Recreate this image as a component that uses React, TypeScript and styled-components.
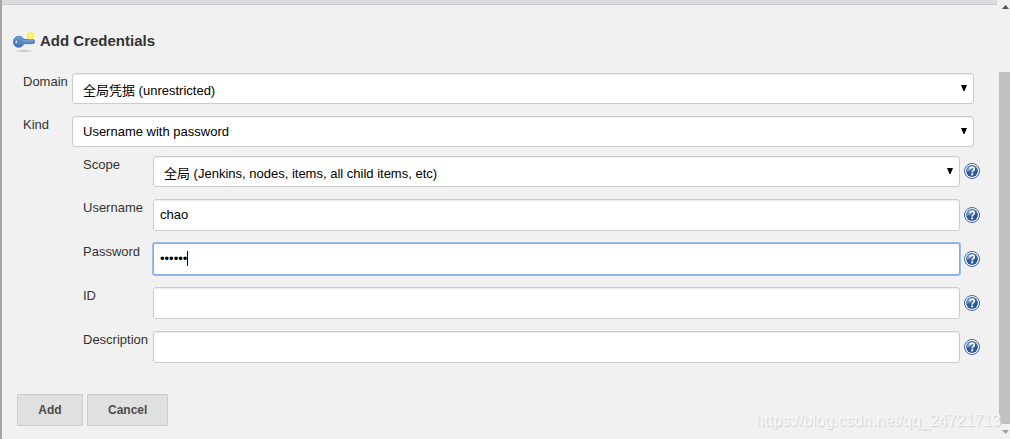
import React from "react";
import styled, { createGlobalStyle, css } from "styled-components";

const GlobalStyle = createGlobalStyle`
  *, *::before, *::after { box-sizing: border-box; }
  body {
    margin: 0;
    background: #f1f1f1;
    color: #333;
    font: 13px/16px "Liberation Sans", "Noto Sans CJK SC", sans-serif;
  }
`;

const Page = styled.div`
  position: relative;
  display: flex;
  min-height: 100vh;
  overflow: hidden;
  border-left: 2px solid #a6a6a6;
`;

const Dialog = styled.main`
  flex: 1;
  min-width: 0;
`;

const TopStrip = styled.div`
  height: 5px;
  background: #dcdcde;
  border-bottom: 1px solid #c6c6c9;
`;

const Heading = styled.h1`
  display: flex;
  align-items: center;
  gap: 4px;
  margin: 24px 0 20px 11px;
  height: 24px;
  font-size: 15px;
  line-height: 24px;
  color: #333;
`;

const Form = styled.form`
  display: flex;
  flex-direction: column;
`;

const Fields = styled.div`
  display: flex;
  flex-direction: column;
  gap: 12px;
  padding: 0 23px 0 21px;
`;

const Nested = styled(Fields)`
  padding: 9px 17px 0 81px;
`;

const Row = styled.div`
  display: flex;
  align-items: flex-start;
`;

const Label = styled.label<{ $wide?: boolean }>`
  flex: none;
  width: ${(p) => (p.$wide ? 70 : 49)}px;
  line-height: 18px;
  white-space: nowrap;
`;

const Control = styled.div`
  position: relative;
  flex: 1;
  min-width: 0;
`;

const fieldStyle = css`
  display: block;
  width: 100%;
  margin: 0;
  border: 1px solid #ccc;
  border-radius: 3px;
  background: #fff;
  box-shadow: inset 0 1px 1px rgba(0, 0, 0, 0.075);
  color: #000;
  font: inherit;
  outline: none;
`;

const Select = styled.select<{ $low?: boolean }>`
  ${fieldStyle}
  appearance: none;
  height: 31px;
  padding: ${(p) => (p.$low ? "4px 24px 0 10px" : "0 24px 0 10px")};
`;

const Arrow = styled.svg`
  position: absolute;
  top: 12px;
  right: 7px;
  width: 6px;
  height: 6px;
  pointer-events: none;
`;

const Input = styled.input<{ $active?: boolean }>`
  ${fieldStyle}
  height: 32px;
  padding: 0 6px 2px;
  ${(p) =>
    p.$active &&
    css`
      border-color: #83abe8;
      box-shadow: 0 0 0 1px #9dbdf0;
      border-radius: 2px;
      caret-color: transparent;
    `}
`;

const Caret = styled.span`
  position: absolute;
  top: 8px;
  left: 34px;
  width: 1px;
  height: 15px;
  background: #000;
`;

const HelpButton = styled.button`
  flex: none;
  width: 16px;
  height: 16px;
  margin: 8px 0 0 4px;
  padding: 0;
  border: 0;
  background: none;

  svg { display: block; }
`;

const SelectRow = styled(Row)`
  ${HelpButton} { margin-top: 7px; }
`;

const Actions = styled.div`
  display: flex;
  gap: 4px;
  padding: 31px 0 13px 15px;
`;

const Button = styled.button`
  min-width: 66px;
  height: 32px;
  padding: 0 20px;
  border: 1px solid #ccc;
  border-radius: 1px;
  background: #e0e0e0;
  color: #4d4d4a;
  font: bold 12px/16px "Liberation Sans", sans-serif;
`;

const Scrollbar = styled.div`
  display: flex;
  flex-direction: column;
  align-items: center;
  flex: none;
  width: 13px;
  padding-left: 2px;

  svg { flex: none; display: block; }
`;

const Track = styled.div`
  display: flex;
  flex: 1;
  width: 100%;
  padding-top: 57px;
`;

const Thumb = styled.div`
  flex: 1;
  background: #c1c1c1;
`;

const Watermark = styled.span`
  position: absolute;
  right: 9px;
  bottom: 8px;
  color: #f8f8f8;
  font-size: 16px;
  line-height: 20px;
  text-shadow: 1px 1px 1px #cfcfcf;
`;

function KeyIcon() {
  return (
    <svg width="23" height="24" viewBox="0 0 23 24" aria-hidden="true">
      <defs>
        <linearGradient id="key" x1="0" y1="0" x2="0" y2="1">
          <stop offset="0" stopColor="#6d9fd8" />
          <stop offset="1" stopColor="#3f72b5" />
        </linearGradient>
        <radialGradient id="spark">
          <stop offset="0" stopColor="#fff" />
          <stop offset="0.3" stopColor="#fffbc0" />
          <stop offset="0.55" stopColor="#ffef20" />
          <stop offset="1" stopColor="#fff34a" stopOpacity="0.6" />
        </radialGradient>
        <radialGradient id="shade">
          <stop offset="0" stopColor="#999" stopOpacity="0.75" />
          <stop offset="1" stopColor="#999" stopOpacity="0" />
        </radialGradient>
      </defs>
      <ellipse cx="11" cy="22" rx="10" ry="1.3" fill="url(#shade)" />
      <path
        d="M5.5 7.3C8 7.2 9.8 8.5 10.6 10.3L20.5 10.6L21.7 12.2L20.9 14.6L19.4 14.4L18.1 15L16.8 14.4L15.6 15.1L14.3 14.5L10.8 14.8C10 17 8.3 18.3 5.7 18.3C2.6 18.3.3 16 .3 12.9C.3 9.8 2.6 7.3 5.5 7.3Z"
        fill="url(#key)"
        stroke="#3b6dad"
        strokeWidth="0.7"
      />
      <path d="M10 11.9H20" stroke="#8db4e0" strokeWidth="0.8" />
      <ellipse cx="3.3" cy="12.9" rx="1.3" ry="1.9" fill="#dfe6ef" stroke="#3565a5" strokeWidth="0.7" />
      <circle cx="17.6" cy="6.7" r="3.9" fill="url(#spark)" />
    </svg>
  );
}

function Help({ topic }: { topic: string }) {
  return (
    <HelpButton type="button" aria-label={`Help for ${topic}`}>
      <svg width="16" height="16" viewBox="0 0 16 16">
        <circle cx="8" cy="8" r="7.5" fill="#fff" stroke="#3d67a6" strokeWidth="1" />
        <circle cx="8" cy="8" r="5.9" fill="#2e5b9c" />
        <path d="M2.7 8.7A5.4 5.4 0 0 1 11.8 4.1C9 5 6.2 9.2 2.7 8.7Z" fill="#8aabd6" opacity="0.75" />
        <path
          d="M5.8 6.2C5.8 3.6 10.3 3.6 10.3 6C10.3 7.7 8.1 7.6 8.1 9.4"
          fill="none"
          stroke="#fff"
          strokeWidth="1.6"
        />
        <rect x="7.2" y="10.4" width="1.9" height="1.9" fill="#fff" />
      </svg>
    </HelpButton>
  );
}

type SelectFieldProps = { id: string; label: string; option: string; low?: boolean; wide?: boolean };

function SelectField({ id, label, option, low, wide }: SelectFieldProps) {
  return (
    <SelectRow>
      <Label htmlFor={id} $wide={wide}>{label}</Label>
      <Control>
        <Select id={id} $low={low}>
          <option>{option}</option>
        </Select>
        <Arrow viewBox="0 0 6 6" aria-hidden="true">
          <path d="M0 0H6L3.5 6H2.5Z" fill="#000" />
        </Arrow>
      </Control>
      {wide && <Help topic={label} />}
    </SelectRow>
  );
}

type TextFieldProps = { id: string; label: string; value?: string; type?: string; active?: boolean };

function TextField({ id, label, value = "", type = "text", active }: TextFieldProps) {
  return (
    <Row>
      <Label htmlFor={id} $wide>{label}</Label>
      <Control>
        <Input id={id} type={type} defaultValue={value} $active={active} autoComplete="off" />
        {active && <Caret />}
      </Control>
      <Help topic={label} />
    </Row>
  );
}

export default function App() {
  return (
    <>
      <GlobalStyle />
      <Page>
        <Dialog>
          <TopStrip />
          <Heading>
            <KeyIcon />
            Add Credentials
          </Heading>
          <Form onSubmit={(e) => e.preventDefault()}>
            <Fields>
              <SelectField id="domain" label="Domain" option="全局凭据 (unrestricted)" low />
              <SelectField id="kind" label="Kind" option="Username with password" />
            </Fields>
            <Nested>
              <SelectField id="scope" label="Scope" option="全局 (Jenkins, nodes, items, all child items, etc)" low wide />
              <TextField id="username" label="Username" value="chao" />
              <TextField id="password" label="Password" type="password" value="secret" active />
              <TextField id="credential-id" label="ID" />
              <TextField id="description" label="Description" />
            </Nested>
            <Actions>
              <Button type="submit">Add</Button>
              <Button type="button">Cancel</Button>
            </Actions>
          </Form>
        </Dialog>
        <Scrollbar aria-hidden="true">
          <svg width="11" height="15" viewBox="0 0 11 15">
            <path d="M3 9L6.5 5L10 9Z" fill="#505050" />
          </svg>
          <Track>
            <Thumb />
          </Track>
          <svg width="11" height="15" viewBox="0 0 11 15">
            <path d="M3 6H10L6.5 10Z" fill="#a3a3a3" />
          </svg>
        </Scrollbar>
        <Watermark>https://blog.csdn.net/qq_24721713</Watermark>
      </Page>
    </>
  );
}
